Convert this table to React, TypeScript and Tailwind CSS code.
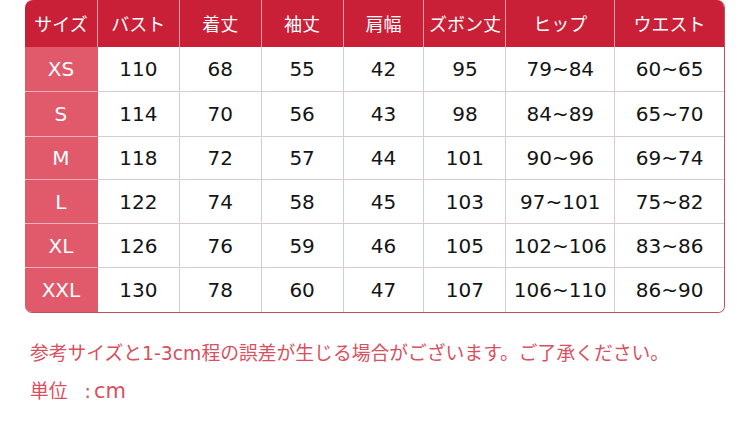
import React from "react";

const headers = ["サイズ", "バスト", "着丈", "袖丈", "肩幅", "ズボン丈", "ヒップ", "ウエスト"];
const widths = ["w-[73px]", "w-[82px]", "w-[82px]", "w-[82px]", "w-[81px]", "w-[82px]", "w-[109px]", "w-[109px]"];
const rows = [
  ["XS", "110", "68", "55", "42", "95", "79~84", "60~65"],
  ["S", "114", "70", "56", "43", "98", "84~89", "65~70"],
  ["M", "118", "72", "57", "44", "101", "90~96", "69~74"],
  ["L", "122", "74", "58", "45", "103", "97~101", "75~82"],
  ["XL", "126", "76", "59", "46", "105", "102~106", "83~86"],
  ["XXL", "130", "78", "60", "47", "107", "106~110", "86~90"],
];
const heights = ["h-[45px]", "h-[45px]", "h-[43px]", "h-[44px]", "h-[44px]", "h-[44px]"];

const noteFont = { fontFamily: '"DejaVu Sans", "Noto Sans CJK JP", sans-serif' };

export default function App() {
  return (
    <div className="w-[750px] h-[431px] bg-white overflow-hidden relative">
      <div className="ml-[25px] w-[700px] rounded-t-[8px] rounded-b-[7px] overflow-hidden border-r border-b border-[#c4505c]">
        <div className="flex h-[47px] bg-[#c91f37]">
          {headers.map((h, i) => (
            <div
              key={h}
              className={`${widths[i]} flex items-center justify-center text-white text-[18px] ${i < 7 ? "border-r border-[#e8a0a8]" : ""}`}
              style={{ fontFamily: '"Noto Sans CJK JP", sans-serif' }}
            >
              {h}
            </div>
          ))}
        </div>
        {rows.map((r, ri) => (
          <div key={r[0]} className={`flex ${heights[ri]}`}>
            {r.map((c, ci) => (
              <div
                key={ci}
                className={`${widths[ci]} flex items-center justify-center text-[20px] ${
                  ci === 0
                    ? "bg-[#e15a6b] text-white border-r border-[#e15a6b]"
                    : "text-[#141414] bg-white"
                } ${ci > 0 && ci < 7 ? "border-r border-[#dccacd]" : ""} ${
                  ri < 5 ? (ci === 0 ? "border-b border-b-[#f0b4bc]" : "border-b border-b-[#dccacd]") : ""
                }`}
                style={{ fontFamily: '"DejaVu Sans", Verdana, sans-serif' }}
              >
                {c}
              </div>
            ))}
          </div>
        ))}
      </div>
      <div className="ml-[30px] mt-[27px] text-[#d9505f] text-[18.8px] leading-[28px]" style={noteFont}>
        参考サイズと1-3cm程の誤差が生じる場合がございます。ご了承ください。
      </div>
      <div className="ml-[30px] mt-[9px] text-[#d9505f] text-[18.8px] leading-[28px]" style={noteFont}>
        単位<span className="inline-block ml-[17px]">:</span>
        <span className="inline-block ml-[3px] text-[21px]">cm</span>
      </div>
    </div>
  );
}
